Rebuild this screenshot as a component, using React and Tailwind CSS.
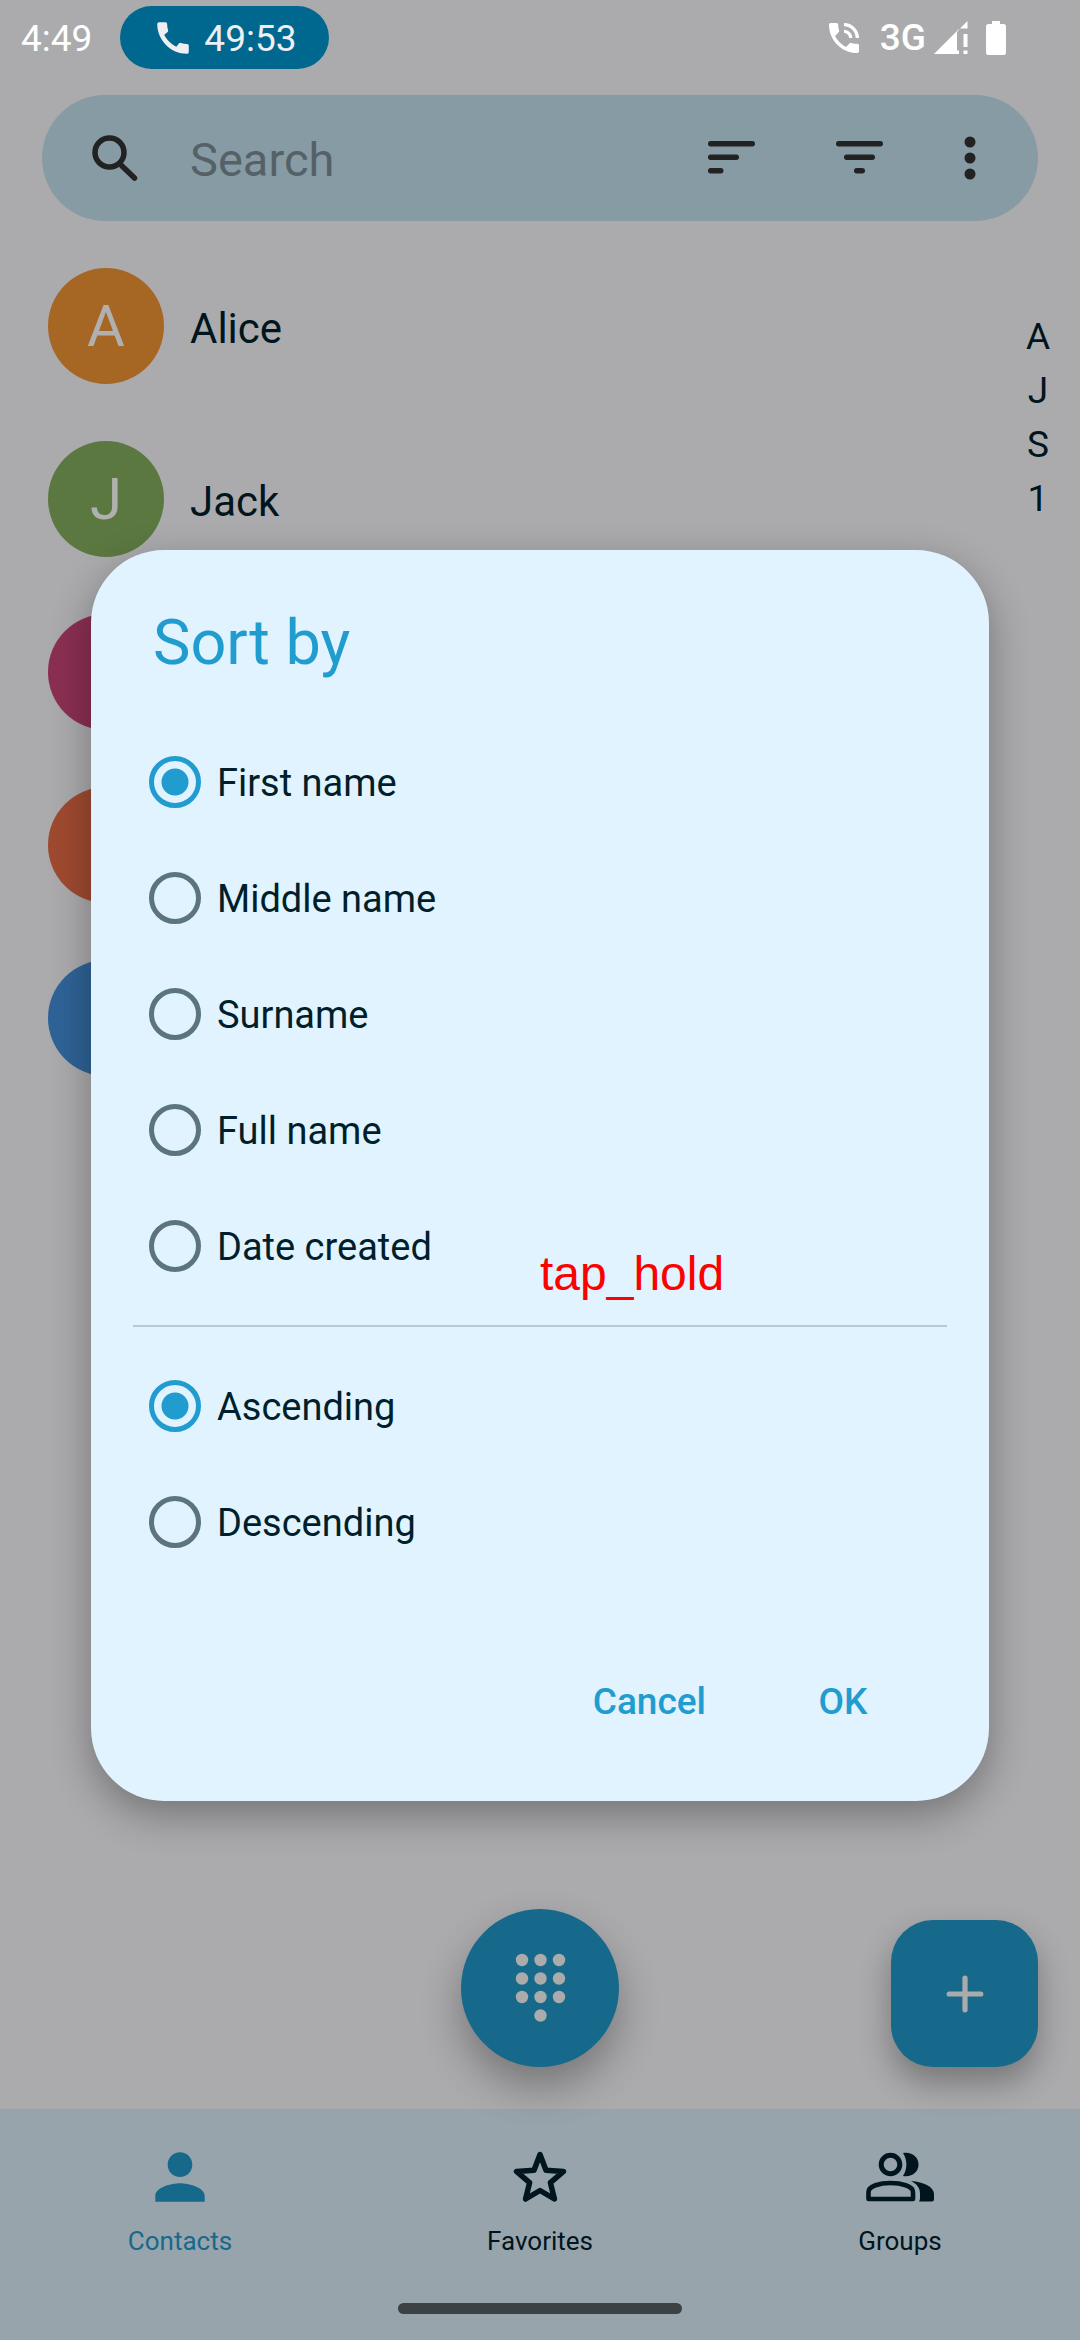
import { useState } from "react";
import { MdCall, MdPhoneInTalk, MdPerson } from "react-icons/md";

const contacts = [
  { name: "Alice", initial: "A", color: "bg-[#a66624]" },
  { name: "Jack", initial: "J", color: "bg-[#5b7841]" },
  { name: "", initial: "", color: "bg-[#8b2f52]" },
  { name: "", initial: "", color: "bg-[#9f4a30]" },
  { name: "", initial: "", color: "bg-[#2f6397]" },
];

const sortFields = ["First name", "Middle name", "Surname", "Full name", "Date created"];
const sortOrders = ["Ascending", "Descending"];

function SearchIcon() {
  return (
    <svg viewBox="0 0 46 46" className="size-[46px]" fill="none" stroke="#222" strokeLinecap="round" aria-hidden="true">
      <circle cx="17.5" cy="17.5" r="14.5" strokeWidth="5.5" />
      <path d="M30 31 L42.5 43" strokeWidth="5.5" />
    </svg>
  );
}

function SortIcon() {
  return (
    <svg viewBox="0 0 48 34" className="h-[34px] w-[48px]" fill="#222" aria-hidden="true">
      <rect x="0" y="0" width="47" height="5.5" rx="2.7" />
      <rect x="0" y="13.5" width="31" height="5.5" rx="2.7" />
      <rect x="0" y="27" width="15.5" height="5.5" rx="2.7" />
    </svg>
  );
}

function FilterIcon() {
  return (
    <svg viewBox="0 0 48 34" className="h-[34px] w-[48px]" fill="#222" aria-hidden="true">
      <rect x="0" y="0" width="47" height="5.5" rx="2.7" />
      <rect x="8" y="13.5" width="31" height="5.5" rx="2.7" />
      <rect x="18" y="27" width="11" height="5.5" rx="2.7" />
    </svg>
  );
}

function MoreIcon() {
  return (
    <svg viewBox="0 0 12 44" className="h-[44px] w-[12px]" fill="#222" aria-hidden="true">
      <circle cx="6" cy="6" r="5.5" />
      <circle cx="6" cy="22" r="5.5" />
      <circle cx="6" cy="38" r="5.5" />
    </svg>
  );
}

function SignalIcon() {
  return (
    <svg viewBox="0 0 34 34" className="size-[34px]" fill="#fff" aria-hidden="true">
      <path d="M0 33 L25 8 V9 Q23 10 23 12 V29.5 H25 V33 Z" />
      <path d="M26 7.5 L33.5 0 V7.5 Z" />
      <rect x="29.5" y="13" width="4" height="13" />
      <rect x="29.5" y="29.5" width="4" height="3.5" />
    </svg>
  );
}

function BatteryIcon() {
  return (
    <svg viewBox="0 0 20 34" className="h-[34px] w-[20px]" fill="#fff" aria-hidden="true">
      <rect x="6" y="0" width="8" height="6" />
      <rect x="0" y="3" width="20" height="31" rx="2.5" />
    </svg>
  );
}

function DialpadIcon() {
  const dots = [];
  for (const y of [7, 25.5, 44]) for (const x of [7, 25.5, 44]) dots.push([x, y]);
  dots.push([25.5, 62.5]);
  return (
    <svg viewBox="0 0 51 70" className="h-[70px] w-[51px]" fill="#ababab" aria-hidden="true">
      {dots.map(([x, y]) => (
        <circle key={`${x}-${y}`} cx={x} cy={y} r="6.2" />
      ))}
    </svg>
  );
}

function PlusIcon() {
  return (
    <svg viewBox="0 0 38 38" className="size-[38px]" stroke="#ababab" strokeWidth="5.2" strokeLinecap="round" aria-hidden="true">
      <path d="M19 3.2 V34.8 M3.2 19 H34.8" />
    </svg>
  );
}

function StarIcon() {
  return (
    <svg viewBox="0 0 54 54" className="size-[54px]" fill="none" stroke="#00151e" strokeWidth="5.5" strokeLinejoin="round" aria-hidden="true">
      <path d="M27 4.5 L33 20.2 L50.5 21.5 L37.4 32.6 L41.4 49 L27 40.5 L12.6 49 L16.6 32.6 L3.5 21.5 L21 20.2 Z" />
    </svg>
  );
}

function GroupsIcon() {
  return (
    <svg viewBox="0 0 68 50" className="h-[50px] w-[68px]" fill="#00151e" aria-hidden="true">
      <circle cx="24.5" cy="12.5" r="9.3" fill="none" stroke="#00151e" strokeWidth="5" />
      <path d="M2.5 47 V40 C2.5 34 14 31 24.5 31 C35 31 47 34 47 40 V47 Z" fill="none" stroke="#00151e" strokeWidth="4.6" strokeLinejoin="round" />
      <path d="M37 1 C46 -0.5 52.5 5 52.5 12.5 C52.5 20 46 25.5 37 24 C41.5 17 41.5 8 37 1 Z" />
      <path d="M45 29 C58 30 68 35 68 42 V47.5 Q68 49.5 66 49.5 H53 Q54 48.5 54 46 V42 C54 36 51 32 45 29 Z" />
    </svg>
  );
}

function RadioGroup({ name, options, value, onChange }) {
  return (
    <div role="radiogroup" aria-label={name} className="flex flex-col">
      {options.map((option) => (
        <label key={option} className="flex h-[116px] items-center gap-4 text-[38px] leading-[44px] text-[#001f2a]">
          <input
            type="radio"
            name={name}
            value={option}
            checked={value === option}
            onChange={() => onChange(option)}
            className="size-[52px] shrink-0 appearance-none rounded-full border-[5px] border-[#5b7480] checked:border-[#219ccf] checked:bg-[radial-gradient(circle,#219ccf_13px,transparent_14px)]"
          />
          <span className="pt-0.5">{option}</span>
        </label>
      ))}
    </div>
  );
}

function StatusBar() {
  return (
    <header className="flex h-[75px] items-center justify-between pr-[74px] pl-[21px] text-[37px] leading-[44px] text-white">
      <div className="flex items-center gap-7">
        <span className="pt-0.5">4:49</span>
        <span className="flex h-[63px] items-center gap-2.5 rounded-full bg-[#00688e] pr-8 pl-8 text-[#eeeff3]">
          <MdCall className="size-[42px]" />
          <span className="pt-0.5">49:53</span>
        </span>
      </div>
      <div className="flex items-center">
        <MdPhoneInTalk className="mr-4 size-[40px]" />
        <span className="mr-2 font-medium">3G</span>
        <span className="mr-[18px]">
          <SignalIcon />
        </span>
        <BatteryIcon />
      </div>
    </header>
  );
}

function SearchBar() {
  return (
    <div className="mx-[42px] mt-5 flex h-[126px] items-center rounded-full bg-[#879ba4] pr-[62px] pl-[50px]">
      <SearchIcon />
      <input
        type="text"
        aria-label="Search"
        placeholder="Search"
        className="ml-[52px] min-w-0 flex-1 bg-transparent pt-1 text-[47px] leading-[56px] outline-none placeholder:text-[#556167]"
      />
      <button type="button" aria-label="Sort" className="mr-20">
        <SortIcon />
      </button>
      <button type="button" aria-label="Filter" className="mr-20">
        <FilterIcon />
      </button>
      <button type="button" aria-label="More options">
        <MoreIcon />
      </button>
    </div>
  );
}

function BottomNav() {
  const item = "flex flex-col items-center text-[26px] leading-[32px]";
  return (
    <footer className="flex h-[231px] flex-col items-center justify-between bg-[#98a4ac] pt-7 pb-[26px]">
      <nav className="grid w-full grid-cols-3">
        <a href="#contacts" className={`${item} text-[#17698b]`}>
          <span className="flex h-[80px] items-center">
            <MdPerson className="size-[74px]" />
          </span>
          <span className="pt-2">Contacts</span>
        </a>
        <a href="#favorites" className={`${item} text-[#00151e]`}>
          <span className="flex h-[80px] items-center">
            <StarIcon />
          </span>
          <span className="pt-2">Favorites</span>
        </a>
        <a href="#groups" className={`${item} text-[#00151e]`}>
          <span className="flex h-[80px] items-center">
            <GroupsIcon />
          </span>
          <span className="pt-2">Groups</span>
        </a>
      </nav>
      <div className="h-[11px] w-[284px] rounded-full bg-[#3c4144]" />
    </footer>
  );
}

function SortDialog() {
  const [field, setField] = useState("First name");
  const [order, setOrder] = useState("Ascending");
  return (
    <div
      role="dialog"
      aria-modal="true"
      aria-labelledby="sort-title"
      className="relative w-full rounded-[73px] bg-[#e0f3ff] pt-14 pb-[47px] shadow-[0_14px_40px_rgba(0,0,0,0.32)]"
    >
      <h2 id="sort-title" className="mb-11 px-[62px] text-[63px] leading-[74px] text-[#219ccf]">
        Sort by
      </h2>
      <div className="px-[58px]">
        <RadioGroup name="Sort field" options={sortFields} value={field} onChange={setField} />
      </div>
      <hr className="mx-[42px] my-[21px] border-t-2 border-[#bbc8d0]" />
      <div className="px-[58px]">
        <RadioGroup name="Sort order" options={sortOrders} value={order} onChange={setOrder} />
      </div>
      <div className="mt-[70px] flex justify-end gap-[42px] pr-[83px] text-[37px] leading-[44px] font-medium text-[#219ccf]">
        <button type="button" className="h-[104px] px-8">
          Cancel
        </button>
        <button type="button" className="h-[104px] w-[126px]">
          OK
        </button>
      </div>
      <span className="absolute top-[696px] left-1/2 font-['Liberation_Sans',sans-serif] text-[48px] leading-[56px] text-[#ff0000]">
        tap_hold
      </span>
    </div>
  );
}

export default function App() {
  return (
    <div className="relative flex min-h-screen flex-col bg-[#ababad] font-[Roboto,sans-serif]">
      <StatusBar />
      <SearchBar />
      <main className="flex flex-1 flex-col justify-between">
        <div className="flex justify-between">
          <ul className="flex flex-1 flex-col gap-[57px] pt-[47px] pl-12">
            {contacts.map((contact, i) => (
              <li key={i} className="flex items-center gap-[26px]">
                <span className={`flex size-[116px] items-center justify-center rounded-full text-[58px] text-[#b0b0b0] ${contact.color}`}>
                  {contact.initial}
                </span>
                <span className="pt-1.5 text-[42px] leading-[50px] text-[#00151e]">{contact.name}</span>
              </li>
            ))}
          </ul>
          <ol className="mr-3 w-[60px] pt-[89px] text-center text-[37px] leading-[54px] text-[#00151e]">
            <li>A</li>
            <li>J</li>
            <li>S</li>
            <li>1</li>
          </ol>
        </div>
        <div className="relative grid grid-cols-3 items-end px-[42px] pb-[42px]">
          <button
            type="button"
            aria-label="Dialpad"
            className="col-start-2 flex size-[158px] items-center justify-center justify-self-center rounded-full bg-[#17698b] shadow-[0_20px_40px_rgba(0,0,0,0.3)]"
          >
            <DialpadIcon />
          </button>
          <button
            type="button"
            aria-label="Add contact"
            className="flex size-[147px] items-center justify-center justify-self-end rounded-[42px] bg-[#17698b] shadow-[0_16px_32px_rgba(0,0,0,0.3)]"
          >
            <PlusIcon />
          </button>
        </div>
      </main>
      <BottomNav />
      <div className="absolute inset-0 flex items-center px-[91px] pt-2.5">
        <SortDialog />
      </div>
    </div>
  );
}
